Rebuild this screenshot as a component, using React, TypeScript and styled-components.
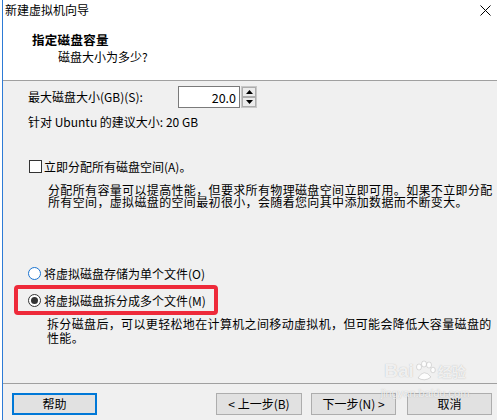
import React from "react";
import styled, { createGlobalStyle } from "styled-components";

const Global = createGlobalStyle`
  html, body { margin: 0; padding: 0; background: #ffffff; }
  body { font-family: "Noto Sans CJK SC", "Noto Sans", sans-serif; font-size: 12px; color: #000; }
  #root { width: 497px; height: 420px; overflow: hidden; }
`;

const Page = styled.div`
  position: relative;
  width: 497px;
  height: 420px;
  overflow: hidden;
  background: #ffffff;
`;

const Window = styled.div`
  margin-left: 2px;
  border-left: 1px solid #2d7bd6;
  height: 420px;
  display: flex;
  flex-direction: column;
  background: #f0f0f0;
`;

const TitleBar = styled.div`
  height: 20px;
  display: flex;
  align-items: center;
  justify-content: space-between;
  padding: 0 6px 2px 2px;
  background: #ffffff;
  line-height: 16px;
`;

const Header = styled.div`
  height: 59px;
  box-sizing: border-box;
  border-bottom: 1px solid #a0a0a0;
  background: #ffffff;
  padding: 10px 0 0 29px;
  display: flex;
  flex-direction: column;
  gap: 1px;
`;

const HeaderTitle = styled.div`
  font-weight: 700;
  font-size: 12.5px;
  line-height: 16px;
  letter-spacing: 0.3px;
`;

const HeaderSub = styled.div`
  line-height: 16px;
  padding-left: 26px;
`;

const Content = styled.div`
  flex: 1;
  padding: 5px 0 0 25px;
  display: flex;
  flex-direction: column;
  position: relative;
`;

const SizeRow = styled.div`
  display: flex;
  align-items: center;
  height: 22px;
`;

const SizeLabel = styled.div`
  width: 150px;
  line-height: 16px;
`;

const NumberInput = styled.div`
  width: 62px;
  height: 22px;
  box-sizing: border-box;
  border: 1px solid #7a7a7a;
  background: #ffffff;
  display: flex;
  align-items: center;
  justify-content: flex-end;
  padding-right: 3px;
  font-size: 12.5px;
`;

const Spinner = styled.div`
  width: 16px;
  height: 22px;
  box-sizing: border-box;
  border: 1px solid #c8c8c8;
  display: flex;
  flex-direction: column;
  margin-left: 1px;
`;

const SpinButton = styled.div`
  flex: 1;
  border: 1px solid #adadad;
  background: #ececec;
  display: flex;
  align-items: center;
  justify-content: center;
`;

const TextLine = styled.div<{ $top: number }>`
  margin-top: ${(p) => p.$top}px;
  line-height: 16px;
`;

const OptionRow = styled.div<{ $top: number }>`
  margin-top: ${(p) => p.$top}px;
  height: 16px;
  display: flex;
  align-items: center;
  position: relative;
`;

const CheckBox = styled.span`
  width: 13px;
  height: 13px;
  box-sizing: border-box;
  border: 1px solid #333333;
  background: #ffffff;
  margin: 0 2px 0 1px;
`;

const Radio = styled.span<{ $checked?: boolean; $focus?: boolean }>`
  width: 13px;
  height: 13px;
  box-sizing: border-box;
  border-radius: 50%;
  border: 1px solid ${(p) => (p.$focus ? "#1a73d0" : "#333333")};
  background: #ffffff;
  margin-right: 3px;
  display: flex;
  align-items: center;
  justify-content: center;
  &::after {
    content: "";
    width: 7px;
    height: 7px;
    border-radius: 50%;
    background: #333333;
    display: ${(p) => (p.$checked ? "block" : "none")};
  }
`;

const Highlight = styled.div`
  position: absolute;
  left: -14px;
  top: -7px;
  width: 204px;
  height: 30px;
  box-sizing: border-box;
  border: 4px solid #ee2a3a;
  border-radius: 4px;
  pointer-events: none;
`;

const Paragraph = styled.div<{ $top: number; $lh: number; $left: number }>`
  margin-top: ${(p) => p.$top}px;
  margin-left: ${(p) => p.$left}px;
  line-height: ${(p) => p.$lh}px;
  letter-spacing: 0.35px;
  white-space: nowrap;
`;

const Footer = styled.div`
  height: 37px;
  box-sizing: border-box;
  border-top: 1px solid #a0a0a0;
  padding: 9px 5px 5px 9px;
  display: flex;
  align-items: flex-start;
`;

const Button = styled.div<{ $default?: boolean; $gap?: number; $width?: number }>`
  width: ${(p) => p.$width ?? 85}px;
  height: 22px;
  box-sizing: border-box;
  margin-left: ${(p) => p.$gap ?? 0}px;
  border: ${(p) => (p.$default ? "2px solid #0078d7" : "1px solid #adadad")};
  background: #e1e1e1;
  display: flex;
  align-items: center;
  justify-content: center;
  line-height: 16px;
`;

const Spacer = styled.div`
  flex: 1;
`;

const Watermark = styled.div`
  position: absolute;
  left: 378px;
  top: 360px;
  width: 94px;
  display: flex;
  flex-direction: column;
  align-items: center;
  color: rgba(255, 255, 255, 0.8);
  text-shadow: 0 0 1px rgba(120, 120, 120, 0.5);
  pointer-events: none;
`;

const WmTop = styled.div`
  display: flex;
  align-items: flex-end;
  font-family: "Liberation Sans", Arial, sans-serif;
  font-weight: 700;
  font-size: 19px;
  line-height: 22px;
`;

const WmCn = styled.span`
  font-family: "Noto Sans CJK SC", sans-serif;
  font-size: 14px;
  font-weight: 700;
  margin-left: 2px;
`;

const WmUrl = styled.div`
  font-family: "Liberation Sans", Arial, sans-serif;
  font-size: 11px;
  line-height: 14px;
  margin-top: 4px;
`;

const Tri = ({ up }: { up?: boolean }) => (
  <svg width="7" height="4" viewBox="0 0 7 4">
    <path d={up ? "M0 4 L3.5 0 L7 4 Z" : "M0 0 L3.5 4 L7 0 Z"} fill="#000" />
  </svg>
);

export default function App() {
  return (
    <>
      <Global />
      <Page>
        <Window>
          <TitleBar>
            <span>新建虚拟机向导</span>
            <svg width="11" height="11" viewBox="0 0 11 11">
              <path d="M0.5 0.5 L10.5 10.5 M10.5 0.5 L0.5 10.5" stroke="#000" strokeWidth="1" />
            </svg>
          </TitleBar>
          <Header>
            <HeaderTitle>指定磁盘容量</HeaderTitle>
            <HeaderSub>磁盘大小为多少?</HeaderSub>
          </Header>
          <Content>
            <SizeRow>
              <SizeLabel>最大磁盘大小(GB)(S):</SizeLabel>
              <NumberInput>20.0</NumberInput>
              <Spinner>
                <SpinButton>
                  <Tri up />
                </SpinButton>
                <SpinButton>
                  <Tri />
                </SpinButton>
              </Spinner>
            </SizeRow>
            <TextLine $top={6}>针对 Ubuntu 的建议大小: 20 GB</TextLine>
            <OptionRow $top={28}>
              <CheckBox />
              <span>立即分配所有磁盘空间(A)。</span>
            </OptionRow>
            <Paragraph $top={10} $lh={12} $left={20}>
              分配所有容量可以提高性能，但要求所有物理磁盘空间立即可用。如果不立即分配
              <br />
              所有空间，虚拟磁盘的空间最初很小，会随着您向其中添加数据而不断变大。
            </Paragraph>
            <OptionRow $top={57}>
              <Radio $focus />
              <span>将虚拟磁盘存储为单个文件(O)</span>
            </OptionRow>
            <OptionRow $top={11}>
              <Radio $checked />
              <span>将虚拟磁盘拆分成多个文件(M)</span>
              <Highlight />
            </OptionRow>
            <Paragraph $top={9} $lh={14} $left={19}>
              拆分磁盘后，可以更轻松地在计算机之间移动虚拟机，但可能会降低大容量磁盘的
              <br />
              性能。
            </Paragraph>
          </Content>
          <Footer>
            <Button $default>帮助</Button>
            <Spacer />
            <Button $width={86}>&lt; 上一步(B)</Button>
            <Button $gap={9}>下一步(N) &gt;</Button>
            <Button $gap={11}>取消</Button>
          </Footer>
        </Window>
        <Watermark>
          <WmTop>
            Bai
            <svg width="22" height="22" viewBox="0 0 22 22">
              <g fill="rgba(255,255,255,0.85)" stroke="rgba(140,140,140,0.5)" strokeWidth="0.6">
                <ellipse cx="5" cy="7" rx="2.5" ry="3" />
                <ellipse cx="10" cy="4" rx="2.5" ry="3" />
                <ellipse cx="15" cy="5" rx="2.5" ry="3" />
                <ellipse cx="19" cy="10" rx="2.3" ry="2.8" />
                <path d="M4 18 Q10 8 17 17 Q11 22 4 18 Z" />
              </g>
            </svg>
            <WmCn>经验</WmCn>
          </WmTop>
          <WmUrl>jingyan.baidu.com</WmUrl>
        </Watermark>
      </Page>
    </>
  );
}
